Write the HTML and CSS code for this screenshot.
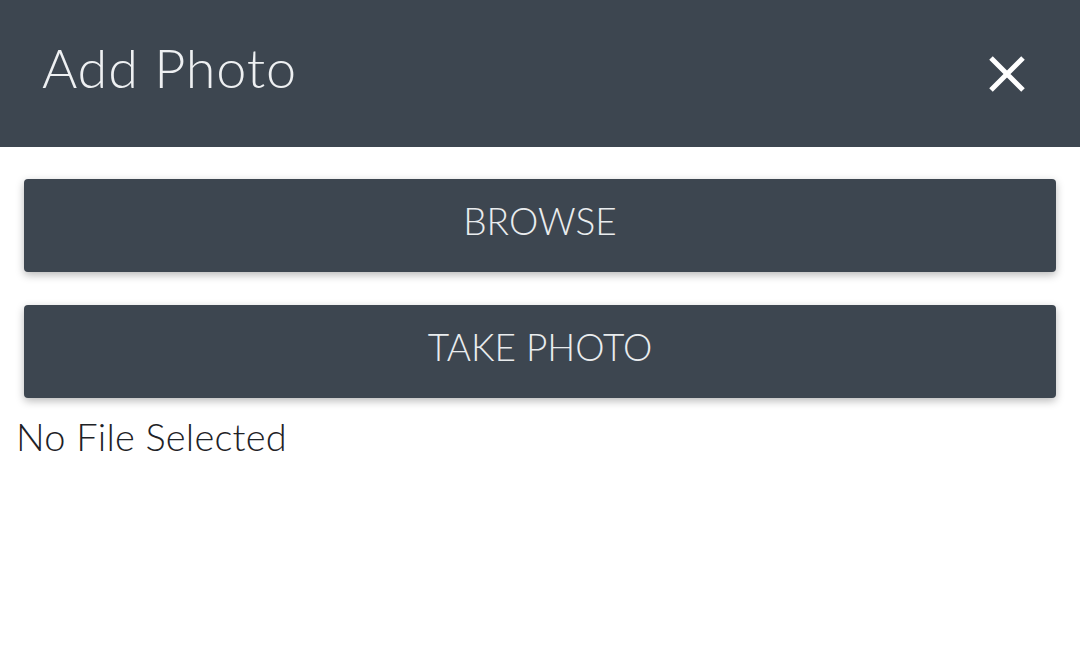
FILE: index.html
```html
<!DOCTYPE html>
<html>
<head>
<meta charset="utf-8">
<link rel="stylesheet" href="styles.css">
</head>
<body>
<header class="bar">
  <h1 class="title">Add Photo</h1>
  <button class="close" aria-label="Close">
    <svg width="38" height="38" viewBox="0 0 38 38"><path d="M3 3 L35 35 M35 3 L3 35" stroke="#ffffff" stroke-width="5" stroke-linecap="butt" fill="none"/></svg>
  </button>
</header>
<main class="content">
  <button class="action">BROWSE</button>
  <button class="action">TAKE PHOTO</button>
  <p class="status">No File Selected</p>
</main>
</body>
</html>
```
FILE: styles.css
```css
html, body {
  margin: 0;
  padding: 0;
  background: #ffffff;
  font-family: Lato, "Noto Sans", sans-serif;
}
.bar {
  height: 147px;
  background: #3d4650;
  display: flex;
  align-items: center;
  justify-content: space-between;
  padding: 0 54px 0 42px;
  box-sizing: border-box;
}
.title {
  margin: 0;
  margin-top: -12px;
  font-size: 54px;
  font-weight: 300;
  color: #eef0f2;
  letter-spacing: 0.8px;
}
.close {
  background: none;
  border: 0;
  padding: 0;
  display: flex;
  margin-top: 0;
}
.content {
  padding: 32px 24px 0 16px;
  display: flex;
  flex-direction: column;
}
.action {
  margin: 0 0 33px 8px;
  height: 93px;
  border: 0;
  border-radius: 4px;
  background: #3d4650;
  color: #e9ecee;
  font-family: Lato, "Noto Sans", sans-serif;
  font-size: 37px;
  font-weight: 300;
  letter-spacing: 0;
  padding: 0 0 10px 0;
  box-shadow: 0 3px 8px rgba(0, 0, 0, 0.28);
}
.action:last-of-type {
  margin-bottom: 0;
}
.status {
  margin: 14px 0 0 0;
  font-size: 38px;
  font-weight: 300;
  color: #1e2226;
  line-height: 48px;
  letter-spacing: 0.2px;
}
```
